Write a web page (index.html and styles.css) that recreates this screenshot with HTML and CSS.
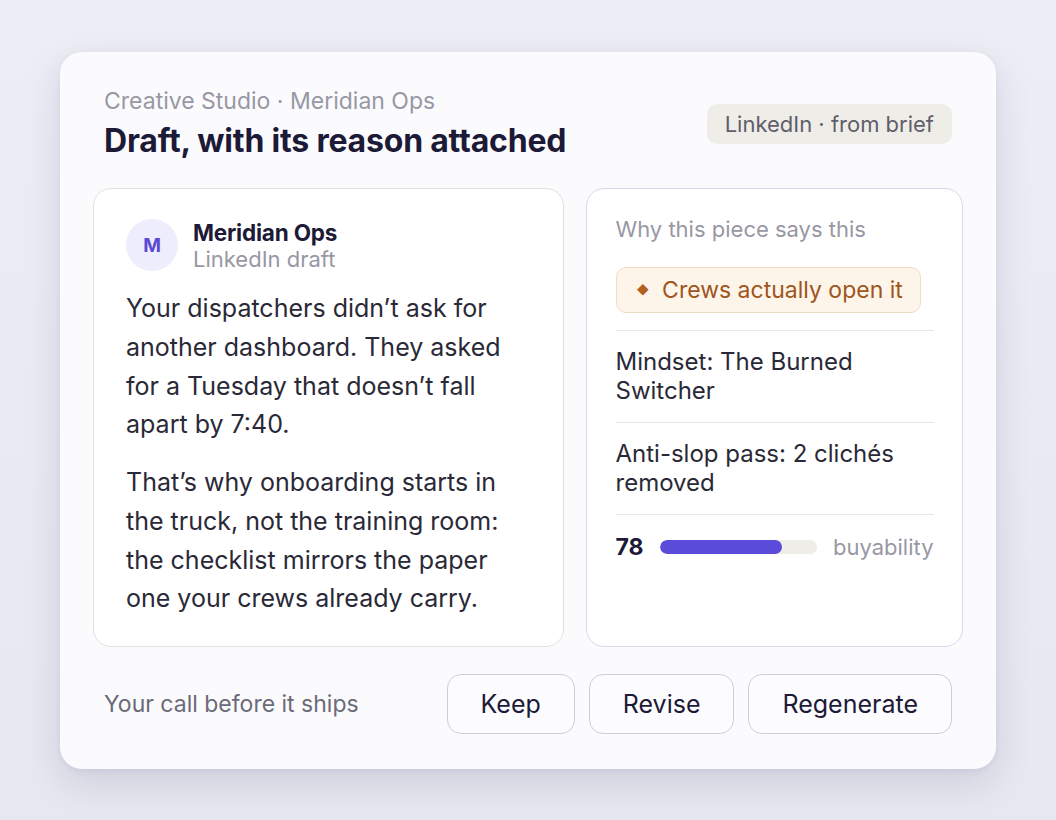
FILE: index.html
```html
<!DOCTYPE html>
<html>
<head>
<meta charset="utf-8">
<link rel="stylesheet" href="styles.css">
</head>
<body>
<div class="card">
  <div class="header">
    <div class="heading">
      <div class="eyebrow">Creative Studio · Meridian Ops</div>
      <h1 class="title">Draft, with its reason attached</h1>
    </div>
    <div class="source-pill">LinkedIn · from brief</div>
  </div>
  <div class="panels">
    <div class="panel draft">
      <div class="author">
        <div class="avatar">M</div>
        <div class="author-text">
          <div class="author-name">Meridian Ops</div>
          <div class="author-sub">LinkedIn draft</div>
        </div>
      </div>
      <p class="post">Your dispatchers didn’t ask for another dashboard. They asked for a Tuesday that doesn’t fall apart by 7:40.</p>
      <p class="post">That’s why onboarding starts in the truck, not the training room: the checklist mirrors the paper one your crews already carry.</p>
    </div>
    <div class="panel reason">
      <div class="reason-label">Why this piece says this</div>
      <div class="reason-top">
        <span class="angle"><span class="diamond">◆</span>Crews actually open it</span>
      </div>
      <div class="reason-row">Mindset: The Burned Switcher</div>
      <div class="reason-row">Anti-slop pass: 2 clichés removed</div>
      <div class="reason-row score">
        <span class="score-num">78</span>
        <span class="bar"><span class="bar-fill" style="width:78%"></span></span>
        <span class="score-label">buyability</span>
      </div>
    </div>
  </div>
  <div class="footer">
    <div class="footer-note">Your call before it ships</div>
    <div class="actions">
      <button class="btn">Keep</button>
      <button class="btn">Revise</button>
      <button class="btn">Regenerate</button>
    </div>
  </div>
</div>
</body>
</html>
```
FILE: styles.css
```css
* { box-sizing: border-box; }
html, body { margin: 0; padding: 0; }
body {
  width: 1056px;
  height: 820px;
  background: linear-gradient(180deg, #ededf5 0%, #e6e7ef 100%);
  font-family: "Inter", "Liberation Sans", sans-serif;
  color: #2a2937;
  padding-top: 52px;
}
.card {
  width: 936px;
  margin: 0 auto;
  background: #fbfbfe;
  border-radius: 22px;
  box-shadow: 0 14px 36px rgba(40, 40, 90, 0.13), 0 2px 6px rgba(40, 40, 90, 0.05);
  padding: 36px 33px 35px;
}
.header {
  display: flex;
  justify-content: space-between;
  align-items: center;
  padding: 0 11px;
}
.eyebrow {
  font-size: 23px;
  line-height: 26px;
  color: #9897a4;
}
.title {
  margin: 8px 0 0;
  font-family: "Inter", sans-serif;
  font-weight: 700;
  font-size: 32px;
  line-height: 38px;
  letter-spacing: -0.2px;
  color: #1d1a38;
}
.source-pill {
  background: #efede7;
  color: #5f5e6b;
  font-size: 22px;
  line-height: 24px;
  padding: 8px 18px;
  border-radius: 10px;
}
.panels {
  display: grid;
  grid-template-columns: 471px 377px;
  gap: 22px;
  margin-top: 28px;
}
.panel {
  background: #ffffff;
  border-radius: 18px;
  height: 459px;
}
.draft {
  border: 1.5px solid #e3e1da;
  padding: 29.5px 32px;
}
.author {
  display: flex;
  align-items: center;
  gap: 15px;
}
.avatar {
  width: 52px;
  height: 52px;
  border-radius: 50%;
  background: #eeedfb;
  color: #5a49d4;
  font-weight: 700;
  font-size: 19px;
  display: flex;
  align-items: center;
  justify-content: center;
}
.author-name {
  font-weight: 700;
  font-size: 22.5px;
  line-height: 27px;
  color: #1d1a38;
  letter-spacing: -0.2px;
}
.author-sub {
  font-size: 22px;
  line-height: 26px;
  color: #9897a4;
}
.post {
  margin: 17.6px 0 0;
  font-size: 25px;
  line-height: 38.7px;
  color: #2a2937;
}
.post + .post { margin-top: 19.3px; }
.reason {
  border: 1.5px solid #d9d7ee;
  padding: 26.5px 28.5px;
}
.reason-label {
  font-size: 22px;
  line-height: 26px;
  color: #9897a4;
}
.reason-top {
  padding: 25px 0 17px;
  border-bottom: 1.5px solid #e9e7e4;
}
.angle {
  display: inline-flex;
  align-items: center;
  gap: 13px;
  background: #fdf4ea;
  border: 1.5px solid #f0dcc3;
  border-radius: 10px;
  color: #9f551b;
  font-size: 23px;
  line-height: 28px;
  padding: 8px 17px 8px 20px;
}
.diamond {
  font-size: 12px;
  color: #b4611f;
}
.reason-row {
  padding: 16px 0 17px;
  font-size: 24px;
  line-height: 29px;
  color: #2a2937;
  border-bottom: 1.5px solid #e9e7e4;
}
.reason-row.score {
  border-bottom: none;
  padding-top: 18px;
  display: flex;
  align-items: center;
  gap: 16px;
}
.score-num {
  font-weight: 700;
  font-size: 23px;
  color: #1d1a38;
}
.bar {
  flex: 1;
  height: 14px;
  background: #efede8;
  border-radius: 7px;
  overflow: hidden;
  display: block;
}
.bar-fill {
  display: block;
  height: 100%;
  background: #5a4bdb;
  border-radius: 7px;
}
.score-label {
  font-size: 22px;
  color: #9897a4;
}
.footer {
  display: flex;
  justify-content: space-between;
  align-items: center;
  margin-top: 27px;
  padding: 0 11px;
}
.footer-note {
  font-size: 23px;
  color: #6b6a78;
}
.actions {
  display: flex;
  gap: 14px;
}
.btn {
  font-family: "Inter", sans-serif;
  font-size: 25px;
  color: #1d1a38;
  background: #fcfcff;
  border: 1.5px solid #cfced8;
  border-radius: 14px;
  height: 60px;
  padding: 0 33px;
}
```
